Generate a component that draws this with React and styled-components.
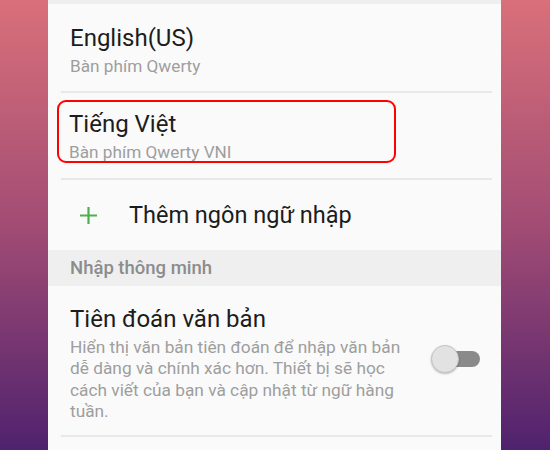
import React from "react";
import styled, { createGlobalStyle } from "styled-components";

const GlobalStyle = createGlobalStyle`
  html, body {
    margin: 0;
    padding: 0;
  }
  body {
    font-family: Roboto, "Noto Sans", "Liberation Sans", sans-serif;
  }
`;

const Page = styled.div`
  width: 550px;
  height: 450px;
  overflow: hidden;
  background: linear-gradient(180deg, #d9707a 0%, #a24c74 50%, #4f226e 100%);
  display: flex;
  padding-left: 48px;
  box-sizing: border-box;
`;

const Panel = styled.div`
  width: 453px;
  background: #fafafa;
  border-top: 4px solid #eeeeee;
  display: flex;
  flex-direction: column;
`;

const Row = styled.div`
  margin: 0 9px 0 13px;
  border-bottom: 2px solid #e8e8e8;
  box-sizing: border-box;
  height: ${(p) => p.$h}px;
  display: flex;
  align-items: flex-start;
`;

const TextBlock = styled.div`
  padding: ${(p) => (p.$marked ? "7px 10px 0" : "19px 9px 0")};
  margin-top: ${(p) => (p.$marked ? "7px" : "0")};
  margin-left: ${(p) => (p.$marked ? "-4px" : "0")};
  width: ${(p) => (p.$marked ? "339px" : "auto")};
  height: ${(p) => (p.$marked ? "63px" : "auto")};
  box-sizing: border-box;
  border: ${(p) => (p.$marked ? "2px solid #ff0000" : "none")};
  border-radius: 9px;
`;

const Title = styled.div`
  font-size: 24px;
  line-height: 30px;
  color: #1c1c1c;
`;

const Sub = styled.div`
  font-size: 17.2px;
  line-height: 26px;
  color: #9e9e9e;
`;

const AddRow = styled.div`
  margin: 0 9px 0 13px;
  height: 70px;
  display: flex;
  align-items: center;
`;

const PlusIcon = styled.svg`
  width: 19px;
  height: 19px;
  margin-left: 18px;
  margin-right: 31px;
`;

const AddLabel = styled.div`
  font-size: 23.5px;
  color: #1c1c1c;
`;

const SectionHeader = styled.div`
  height: 36px;
  background: #efefef;
  display: flex;
  align-items: center;
  padding-left: 22px;
  font-size: 18.5px;
  font-weight: 500;
  color: #8c8c8c;
`;

const SettingRow = styled.div`
  margin: 0 9px 0 13px;
  height: 151px;
  border-bottom: 2px solid #e8e8e8;
  box-sizing: border-box;
  display: flex;
  align-items: flex-start;
  padding: 18px 0 0 9px;
`;

const SettingText = styled.div`
  width: 350px;
  white-space: nowrap;
`;

const Desc = styled.div`
  font-size: 17.3px;
  line-height: 21.3px;
  color: #9e9e9e;
  margin-top: 3px;
`;

const Toggle = styled.div`
  position: relative;
  width: 49px;
  height: 28px;
  margin-left: 11px;
  margin-top: 41px;
`;

const Track = styled.div`
  position: absolute;
  left: 10px;
  right: 0;
  top: 6px;
  height: 16px;
  border-radius: 8px;
  background: #8a8a8a;
`;

const Thumb = styled.div`
  position: absolute;
  left: 0;
  top: 0;
  width: 26px;
  height: 26px;
  border-radius: 50%;
  background: #e2e2e2;
  border: 1px solid #c4c4c4;
  box-shadow: 0 1px 2px rgba(0, 0, 0, 0.25);
`;

export default function App() {
  return (
    <>
      <GlobalStyle />
      <Page>
        <Panel>
          <Row $h={89}>
            <TextBlock>
              <Title>English(US)</Title>
              <Sub>Bàn phím Qwerty</Sub>
            </TextBlock>
          </Row>
          <Row $h={87}>
            <TextBlock $marked>
              <Title>Tiếng Việt</Title>
              <Sub>Bàn phím Qwerty VNI</Sub>
            </TextBlock>
          </Row>
          <AddRow>
            <PlusIcon viewBox="0 0 19 19">
              <path d="M9.5 1v17M1 9.5h17" stroke="#4caf50" strokeWidth="2.2" fill="none" />
            </PlusIcon>
            <AddLabel>Thêm ngôn ngữ nhập</AddLabel>
          </AddRow>
          <SectionHeader>Nhập thông minh</SectionHeader>
          <SettingRow>
            <SettingText>
              <Title>Tiên đoán văn bản</Title>
              <Desc>
                Hiển thị văn bản tiên đoán để nhập văn bản
                <br />
                dễ dàng và chính xác hơn. Thiết bị sẽ học
                <br />
                cách viết của bạn và cập nhật từ ngữ hàng
                <br />
                tuần.
              </Desc>
            </SettingText>
            <Toggle>
              <Track />
              <Thumb />
            </Toggle>
          </SettingRow>
        </Panel>
      </Page>
    </>
  );
}
